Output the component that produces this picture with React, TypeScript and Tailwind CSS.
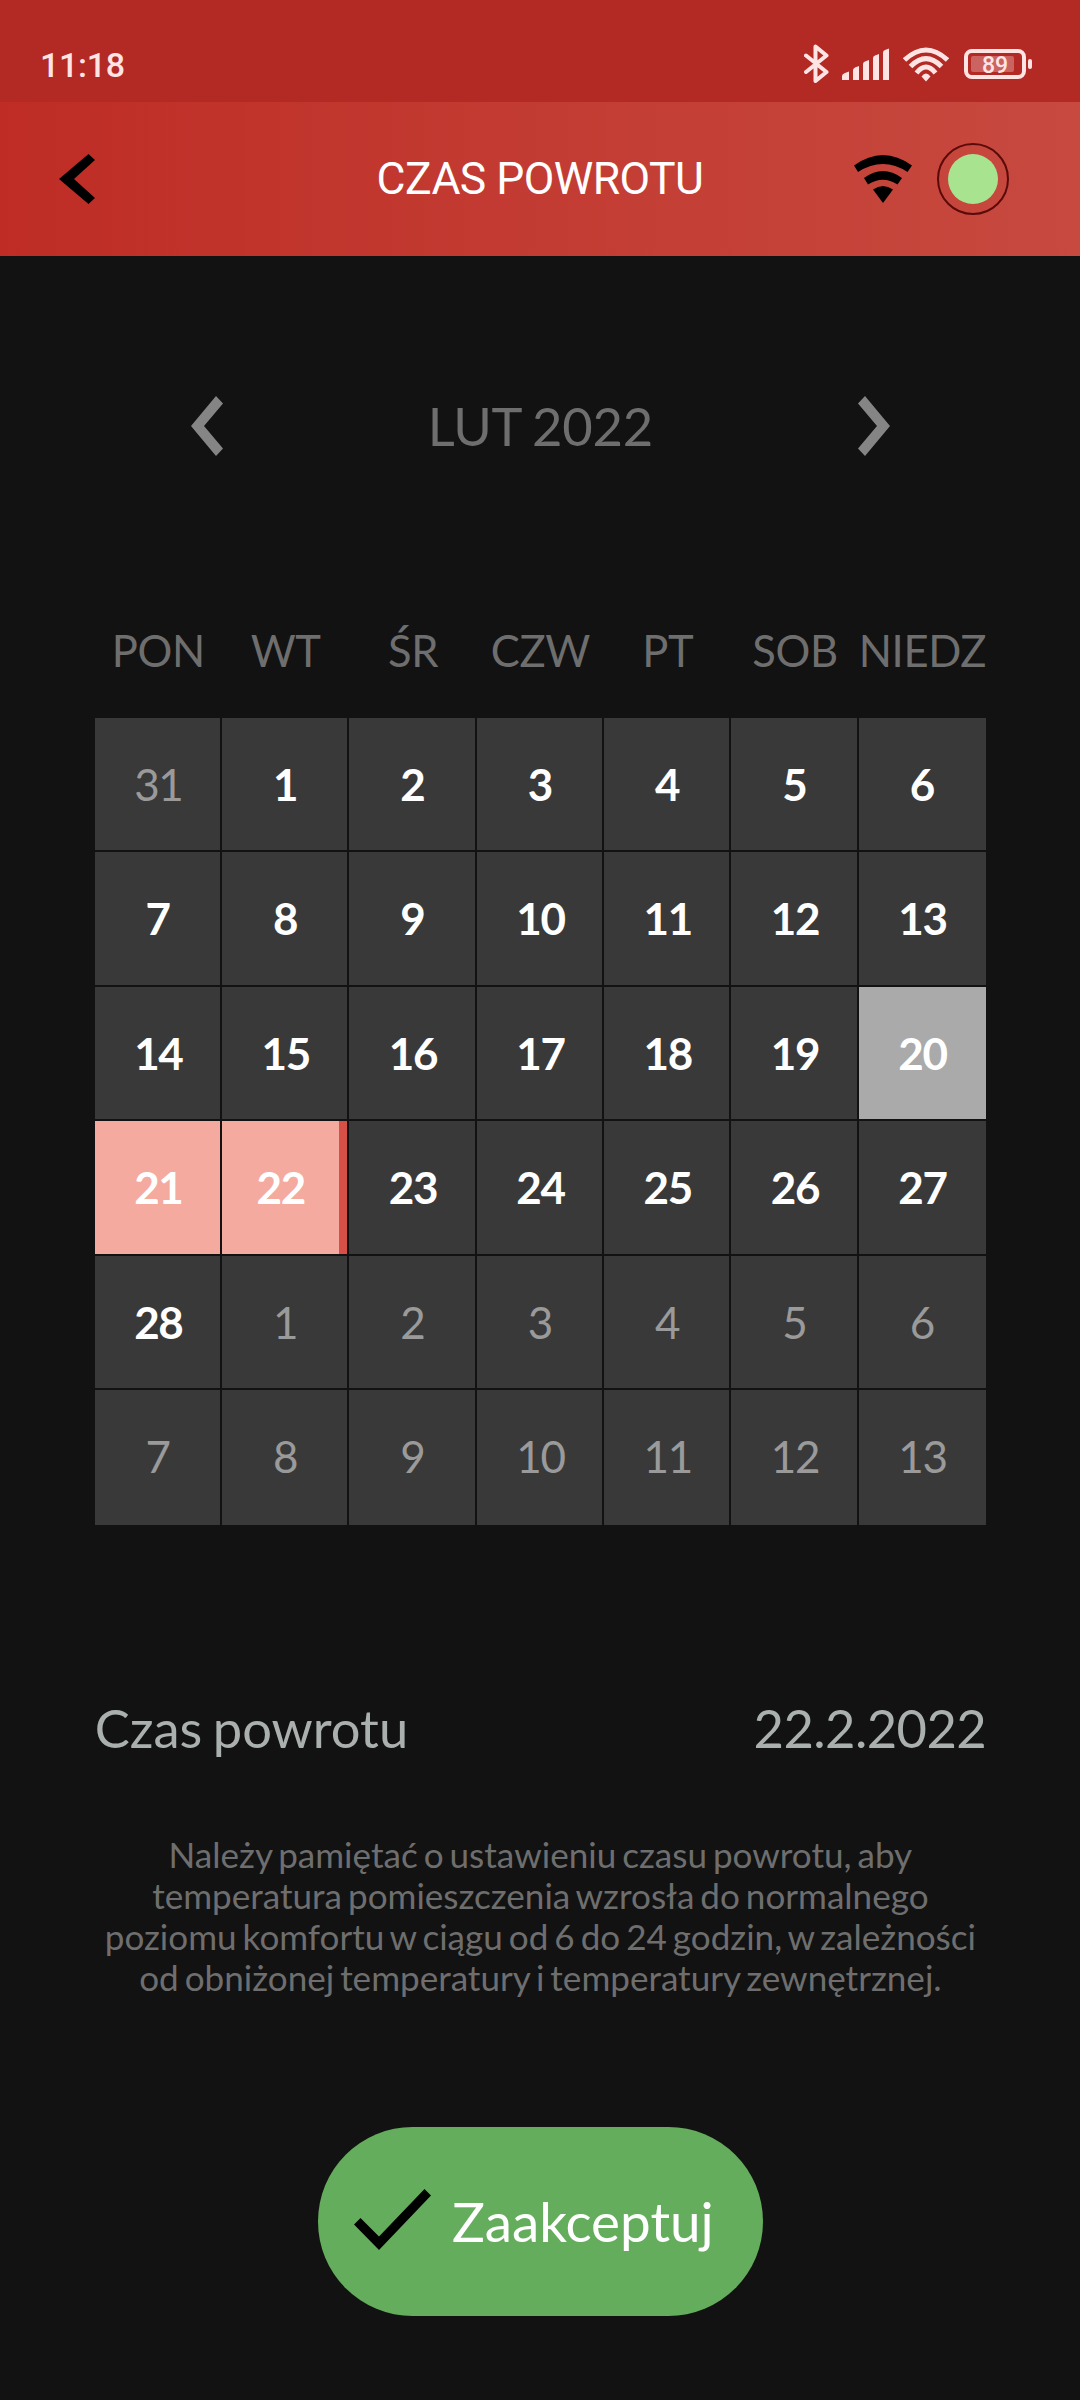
import React from 'react';
import clsx from 'clsx';

interface Day {
  label: number;
  type: 'current' | 'other' | 'today' | 'range' | 'rangeEnd';
}

const WEEKDAYS = ['PON', 'WT', 'ŚR', 'CZW', 'PT', 'SOB', 'NIEDZ'];

const buildDays = (): Day[] => {
  const days: Day[] = [{ label: 31, type: 'other' }];
  for (let d = 1; d <= 28; d++) {
    let type: Day['type'] = 'current';
    if (d === 20) type = 'today';
    if (d === 21) type = 'range';
    if (d === 22) type = 'rangeEnd';
    days.push({ label: d, type });
  }
  for (let d = 1; d <= 13; d++) {
    days.push({ label: d, type: 'other' });
  }
  return days;
};

const StatusBar: React.FC = () => (
  <div className="flex h-[102px] items-start justify-between bg-[#b32a25] pl-10 pr-12 text-[#ffe4e4]">
    <span className="mt-[45px] font-['Roboto',sans-serif] text-[34px] font-medium leading-[40px] tracking-[-0.3px]">11:18</span>
    <div className="mt-[44px] flex h-10 items-center">
      {/* Bluetooth */}
      <svg width="26" height="40" viewBox="0 0 26 40" className="mr-3" fill="none" stroke="currentColor" strokeWidth="4" strokeLinejoin="round" strokeLinecap="round">
        <path d="M2 11.500 L22.500 28 L11.500 37 V2.500 L22.500 11.500 L2 28" />
      </svg>
      {/* Signal */}
      <svg width="48" height="40" viewBox="0 0 48 40" className="mr-[13px]" fill="currentColor">
        <path d="M0 32 Q0 30 3 29 L7 27.500 V36 H0Z" />
        <path d="M11 26 Q11 24.500 13 23.500 L17 22 V36 H11Z" />
        <path d="M21 20 Q21 18 23 17.500 L27 16 V36 H21Z" />
        <path d="M31 14 Q31 12 33 11.500 L37 10 V36 H31Z" />
        <path d="M41 8.500 Q41 6.500 43 6 L47 4.500 V36 H41Z" />
      </svg>
      {/* Wi-Fi */}
      <svg width="46" height="40" viewBox="0 0 46 40" className="mr-[15px]" fill="none" stroke="currentColor" strokeWidth="5">
        <path d="M1.500 16 Q23 -4 44.500 16" />
        <path d="M7.500 22.500 Q23 7 38.500 22.500" />
        <path d="M13.500 29 Q23 17 32.500 29" />
        <path d="M18.500 32.500 Q23 26.500 27.500 32.500 L23 37.500Z" fill="currentColor" stroke="none" />
      </svg>
      {/* Battery */}
      <div className="relative flex h-[30px] w-[62px] items-center justify-center rounded-[8px] border-4 border-[#ffe4e4]">
        <div className="absolute left-[3px] top-[3px] h-4 w-[43px] rounded-[2px] bg-[#cb6461]" />
        <span className="relative mt-[3px] font-['Roboto',sans-serif] text-[23px] font-medium leading-[22px]">89</span>
      </div>
      <div className="ml-[2px] h-[10px] w-1 rounded-[2px] bg-[#ffe4e4]" />
    </div>
  </div>
);

const AppHeader: React.FC = () => (
  <header className="grid h-[154px] grid-cols-[1fr_auto_1fr] items-center bg-linear-to-r from-[#be2c25] to-[#c7493f]">
    <button className="ml-[59px] h-[50px] w-9">
      <svg width="36" height="50" viewBox="0 0 36 50">
        <path d="M0 25 L29.500 0 L36 6 L15 25 L36 44 L29.500 50Z" />
      </svg>
    </button>
    <h1 className="font-['Roboto',sans-serif] text-[44.5px] leading-[54px] tracking-[-0.55px] text-white">CZAS POWROTU</h1>
    <div className="mr-[71px] flex items-center justify-end gap-[25px]">
      <svg width="58" height="48" viewBox="0 0 58 48">
        <path d="M0 10.500 Q29 -10.500 58 10.500 L53.500 17 Q29 1 4 17Z" />
        <path d="M10 23 Q29 9 48 23 L43.500 29.500 Q29 20 14 29.500Z" />
        <path d="M19 34.500 Q29 27.500 39 34.500 L29 48Z" />
      </svg>
      <div className="flex size-[72px] items-center justify-center rounded-full border-2 border-[#5a0a08]">
        <div className="size-[50px] rounded-full bg-[#a8e490]" />
      </div>
    </div>
  </header>
);

interface DayCellProps {
  day: Day;
  lastCol: boolean;
  lastRow: boolean;
}

const DayCell: React.FC<DayCellProps> = ({ day, lastCol, lastRow }) => (
  <div
    className={clsx(
      'flex h-[134.5px] border-[#121212] text-[44px]',
      !lastCol && 'border-r-2',
      !lastCol && day.type !== 'rangeEnd' && 'pl-[2px]',
      lastRow ? 'pb-[2px]' : 'border-b-2',
      day.label > 9 && 'tracking-[-1.3px]',
      day.type === 'other' && 'bg-[#393939] text-[#9a9a9a]',
      day.type === 'current' && 'bg-[#393939] font-bold text-white',
      day.type === 'today' && 'bg-[#aaaaaa] font-bold text-white',
      (day.type === 'range' || day.type === 'rangeEnd') && 'bg-[#f4aa9f] font-bold text-white',
    )}
  >
    <span className="flex flex-1 items-center justify-center">{day.label}</span>
    {day.type === 'rangeEnd' && <span className="w-2 bg-[#d75047]" />}
  </div>
);

const App: React.FC = () => {
  const days = buildDays();

  return (
    <div className="flex h-[2400px] w-[1080px] flex-col overflow-hidden bg-[#121212] font-['Lato',sans-serif]">
      <StatusBar />
      <AppHeader />

      <main className="flex flex-1 flex-col pl-[94.7px] pr-[93.9px]">
        <div className="mt-[140px] flex h-[60px] items-center justify-between px-24 text-[#6e6e6e]">
          <svg width="32" height="60" viewBox="0 0 32 60" fill="#858585">
            <path d="M0 30 L25 0 L32 7.500 L13 30 L32 52.500 L25 60Z" />
          </svg>
          <span className="text-[52.5px] leading-[60px] tracking-[-0.2px] [word-spacing:-2px]">LUT 2022</span>
          <svg width="32" height="60" viewBox="0 0 32 60" fill="#858585">
            <path d="M32 30 L7 0 L0 7.500 L19 30 L0 52.500 L7 60Z" />
          </svg>
        </div>

        <div className="mt-[164px] grid h-[60px] grid-cols-7 text-[43.5px] leading-[60px] tracking-[-0.3px] text-[#6e6e6e]">
          {WEEKDAYS.map((name) => (
            <span key={name} className="flex justify-center whitespace-nowrap">{name}</span>
          ))}
        </div>

        <div className="mt-[37.6px] grid grid-cols-7">
          {days.map((day, i) => (
            <DayCell key={i} day={day} lastCol={i % 7 === 6} lastRow={i >= 35} />
          ))}
        </div>

        <div className="mt-[173px] flex h-[60px] justify-between text-[52.5px] leading-[60px] text-[#a9b0ae]">
          <span className="[word-spacing:-3px]">Czas powrotu</span>
          <span className="tracking-[-0.6px]">22.2.2022</span>
        </div>

        <p className="mt-[76px] whitespace-nowrap text-center text-[35.1px] leading-[41px] text-[#6e6e6e] [word-spacing:-3px]">
          Należy pamiętać o ustawieniu czasu powrotu, aby
          <br />
          temperatura pomieszczenia wzrosła do normalnego
          <br />
          poziomu komfortu w ciągu od 6 do 24 godzin, w zależności
          <br />
          od obniżonej temperatury i temperatury zewnętrznej.
        </p>

        <button className="mt-[129px] flex h-[189px] w-[445px] items-center self-center rounded-full bg-[#64ad5c] pl-9 text-white">
          <svg width="77" height="61" viewBox="0 0 77 61" className="mt-[-4px]" fill="#000">
            <path d="M0 35.500 L6.500 29 L25 47.500 L70.500 0 L77 6.500 L25 61Z" />
          </svg>
          <span className="ml-[21px] text-[54.8px] leading-[64px]">Zaakceptuj</span>
        </button>
      </main>
    </div>
  );
};

export default App;
